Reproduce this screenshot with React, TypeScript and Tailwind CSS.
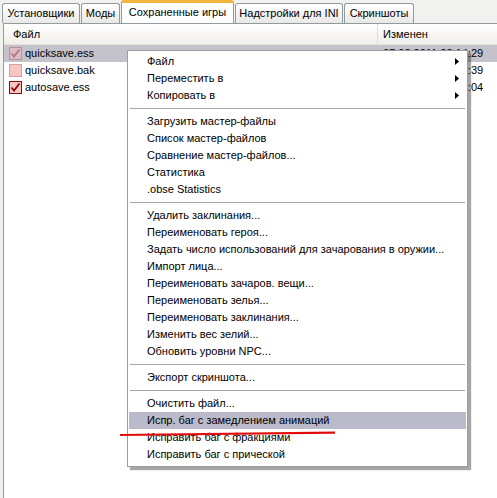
import React from "react";

type Tab = { label: string; w: string; active?: boolean };

const tabs: Tab[] = [
  { label: "Установщики", w: "w-[78px]" },
  { label: "Моды", w: "w-[39px]" },
  { label: "Сохраненные игры", w: "w-[113px]", active: true },
  { label: "Надстройки для INI", w: "w-[108px]" },
  { label: "Скриншоты", w: "w-[70px]" },
];

type SaveFile = { name: string; date: string; state: "selected" | "off" | "on" };

const files: SaveFile[] = [
  { name: "quicksave.ess", date: "07.03.2011 23:14:29", state: "selected" },
  { name: "quicksave.bak", date: "07.03.2011 23:10:39", state: "off" },
  { name: "autosave.ess", date: "07.03.2011 22:58:04", state: "on" },
];

type MenuEntry = { label?: string; sub?: boolean; hot?: boolean; sep?: boolean };

const menu: MenuEntry[] = [
  { label: "Файл", sub: true },
  { label: "Переместить в", sub: true },
  { label: "Копировать в", sub: true },
  { sep: true },
  { label: "Загрузить мастер-файлы" },
  { label: "Список мастер-файлов" },
  { label: "Сравнение мастер-файлов..." },
  { label: "Статистика" },
  { label: ".obse Statistics" },
  { sep: true },
  { label: "Удалить заклинания..." },
  { label: "Переименовать героя..." },
  { label: "Задать число использований для зачарования в оружии..." },
  { label: "Импорт лица..." },
  { label: "Переименовать зачаров. вещи..." },
  { label: "Переименовать зелья..." },
  { label: "Переименовать заклинания..." },
  { label: "Изменить вес зелий..." },
  { label: "Обновить уровни NPC..." },
  { sep: true },
  { label: "Экспорт скриншота..." },
  { sep: true },
  { label: "Очистить файл..." },
  { label: "Испр. баг с замедлением анимаций", hot: true },
  { label: "Исправить баг с фракциями" },
  { label: "Исправить баг с прической" },
];

function CheckBox({ state }: { state: SaveFile["state"] }) {
  const fill = state === "selected" ? "#dcbcc4" : "#f9c4c4";
  const edge = state === "on" ? "#7a1010" : state === "selected" ? "#b89098" : "#d8a0a0";
  const tick = state === "on" ? "#8c0a0a" : "#b07888";
  return (
    <svg width="13" height="13" viewBox="0 0 13 13" className="shrink-0">
      <rect x="0.5" y="0.5" width="12" height="12" fill={fill} stroke={edge} />
      {state !== "off" && (
        <path d="M2.5 6.5 L5 9.5 L10.5 2.5" fill="none" stroke={tick} strokeWidth="1.8" />
      )}
    </svg>
  );
}

export default function App() {
  return (
    <div
      className="relative w-[497px] h-[498px] overflow-hidden bg-[#f1f1ef] text-[11px] text-black"
      style={{ fontFamily: '"Liberation Sans", Arial, sans-serif' }}
    >
      {/* tab strip */}
      <div className="flex items-end h-[23px] pl-[2px] gap-[1px]">
        {tabs.map((t) =>
          t.active ? (
            <div
              key={t.label}
              className={`${t.w} h-[23px] shrink-0 relative z-10 flex items-center justify-center bg-white border-x border-[#919b9c] border-t-[3px] border-t-[#f5b43c] rounded-t-[3px] pb-[1px] whitespace-nowrap`}
            >
              {t.label}
            </div>
          ) : (
            <div
              key={t.label}
              className={`${t.w} h-[20px] shrink-0 flex items-center justify-center bg-gradient-to-b from-white to-[#e8e8e6] border border-b-0 border-[#919b9c] rounded-t-[3px] whitespace-nowrap`}
            >
              {t.label}
            </div>
          )
        )}
      </div>

      {/* list panel */}
      <div className="ml-[3px] h-[475px] border-t border-l border-[#919b9c] bg-white">
        <div className="flex h-[21px] bg-gradient-to-b from-white to-[#f0efe9] border-b border-[#e2e0d8]">
          <div className="w-[374px] pl-[9px] flex items-center border-r border-[#dedcd4]">Файл</div>
          <div className="pl-[5px] flex items-center">Изменен</div>
        </div>
        {files.map((f) => (
          <div
            key={f.name}
            className={`flex h-[17px] items-center ${f.state === "selected" ? "bg-[#c4c3cc]" : ""}`}
          >
            <div className="w-[375px] flex items-center pl-[5px] gap-[3px]">
              <CheckBox state={f.state} />
              <span>{f.name}</span>
            </div>
            <div className="pl-[4px] whitespace-nowrap">{f.date}</div>
          </div>
        ))}
      </div>

      {/* context menu */}
      <div className="absolute left-[127px] top-[50px] w-[341px] bg-white border border-[#9d9d9d] pt-[2px] pb-[3px] px-[1px] shadow-[3px_3px_1px_rgba(0,0,0,0.35)] z-20">
        {menu.map((m, i) =>
          m.sep ? (
            <div key={i} className="h-[9px] flex items-center px-[1px]">
              <div className="w-full h-px bg-[#a7a6aa]" />
            </div>
          ) : (
            <div
              key={i}
              className={`h-[17px] flex items-center pl-[18px] pr-[6px] whitespace-nowrap ${m.hot ? "bg-[#bbbacb]" : ""}`}
            >
              <span className="flex-1">{m.label}</span>
              {m.sub && (
                <svg width="4" height="7" viewBox="0 0 4 7" className="mr-[1px]">
                  <path d="M0 0 L4 3.5 L0 7 Z" fill="#000" />
                </svg>
              )}
            </div>
          )
        )}
      </div>

      {/* hand-drawn red underline */}
      <svg className="absolute left-0 top-0 z-30 pointer-events-none" width="497" height="498">
        <path d="M120 435 L335 432.6" stroke="#e20c0c" strokeWidth="2.2" fill="none" />
      </svg>
    </div>
  );
}
